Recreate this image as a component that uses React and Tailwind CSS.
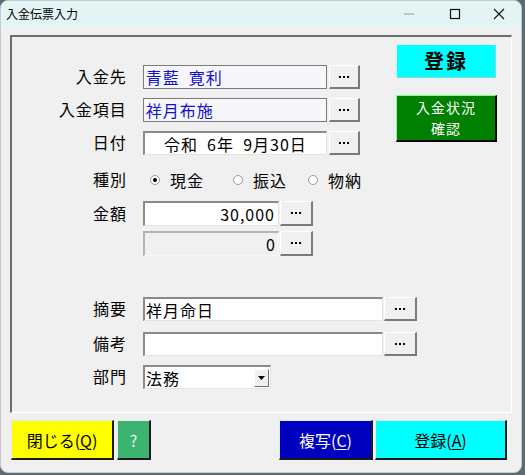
import React from "react";

const font = { fontFamily: '"Noto Sans CJK JP", "Noto Sans", sans-serif' };

// raised "..." button used beside the inputs
function DotsButton({ className }) {
  return (
    <div
      className={
        "flex items-center justify-center bg-[#f0f0f0] border-t border-l border-white border-b-2 border-r-2 border-b-[#7a7a7a] border-r-[#7a7a7a] " +
        className
      }
    >
      <span className="flex gap-[2px]">
        <span className="w-[2px] h-[2px] bg-black" />
        <span className="w-[2px] h-[2px] bg-black" />
        <span className="w-[2px] h-[2px] bg-black" />
      </span>
    </div>
  );
}

function Label({ children }) {
  return (
    <div className="w-[115px] text-right text-[16px] leading-none tracking-[1px] text-black -mt-[2px]">
      {children}
    </div>
  );
}

function Radio({ checked, label, className }) {
  return (
    <div className={"flex items-center " + className}>
      <span className="w-[10px] h-[10px] rounded-full border border-[#9a9a9a] bg-white flex items-center justify-center">
        {checked && <span className="w-[4px] h-[4px] rounded-full bg-black" />}
      </span>
      <span className="ml-[10px] text-[16px] leading-none tracking-[1px]">{label}</span>
    </div>
  );
}

function ColorButton({ className, children }) {
  return (
    <div
      className={
        "flex items-center justify-center h-[40px] text-[16px] border-t border-l border-[#e8e8e8] border-b-2 border-r-2 border-b-[#1a1a1a] border-r-[#1a1a1a] " +
        className
      }
    >
      {children}
    </div>
  );
}

export default function App() {
  return (
    <div className="w-[525px] h-[475px] bg-[#5b6c72] overflow-hidden" style={font}>
      <div className="w-[522px] h-[473px] bg-[#f0f0f0] rounded-[8px] border border-[#c4c9c9] overflow-hidden">
        {/* title bar */}
        <div className="h-[26px] bg-[#e3f4f4] flex items-center">
          <span className="ml-[5px] text-[12px] text-black">入金伝票入力</span>
          <div className="ml-auto flex items-center">
            <svg width="12" height="12" viewBox="0 0 12 12" className="mr-[34px]">
              <line x1="1" y1="6" x2="11" y2="6" stroke="#9a9a9a" strokeWidth="1" />
            </svg>
            <svg width="12" height="12" viewBox="0 0 12 12" className="mr-[32px]">
              <rect x="1.5" y="1.5" width="9" height="9" fill="none" stroke="#111" strokeWidth="1.2" />
            </svg>
            <svg width="12" height="12" viewBox="0 0 12 12" className="mr-[16px]">
              <path d="M1 1 L11 11 M11 1 L1 11" stroke="#111" strokeWidth="1.1" />
            </svg>
          </div>
        </div>

        <div className="pl-[9px]">
          {/* group frame */}
          <div className="mt-[8px] w-[502px] h-[378px] border-t-2 border-l-2 border-t-[#6e6e6e] border-l-[#6e6e6e] border-b border-r border-b-white border-r-white">
            {/* top: first three rows + side buttons */}
            <div className="flex">
              <div className="w-[348px] pt-[28px]">
                <div className="flex items-center h-[24px]">
                  <Label>入金先</Label>
                  <div className="ml-[16px] w-[185px] h-[24px] border border-[#7a7a7a] bg-[#f6f6fb] flex items-center pl-[2px] text-[16px] text-[#1010d0] tracking-[1px]">
                    青藍&nbsp;&nbsp;寛利
                  </div>
                  <DotsButton className="ml-[2px] w-[31px] h-[24px]" />
                </div>
                <div className="flex items-center h-[24px] mt-[9px]">
                  <Label>入金項目</Label>
                  <div className="ml-[16px] w-[185px] h-[24px] border border-[#7a7a7a] bg-[#f6f6fb] flex items-center pl-[2px] text-[16px] text-[#1010d0] tracking-[1px]">
                    祥月布施
                  </div>
                  <DotsButton className="ml-[2px] w-[31px] h-[24px]" />
                </div>
                <div className="flex items-center h-[24px] mt-[9px]">
                  <Label>日付</Label>
                  <div className="ml-[16px] w-[185px] h-[24px] border-t-2 border-l-2 border-t-[#8a8a8a] border-l-[#8a8a8a] border-b border-r border-b-[#e4e4e4] border-r-[#e4e4e4] bg-white flex items-center justify-center text-[16px] text-black tracking-[1px]">
                    令和&nbsp;&nbsp;6年&nbsp;&nbsp;9月30日
                  </div>
                  <DotsButton className="ml-[2px] w-[31px] h-[24px]" />
                </div>
              </div>
              <div className="ml-[36px] pt-[7px]">
                <div className="w-[100px] h-[34px] bg-[#00ffff] border-t border-l border-[#d8ffff] border-b border-r border-b-[#8ad8d8] border-r-[#8ad8d8] flex items-center justify-center text-[20px] font-bold tracking-[2px] text-black">
                  登録
                </div>
                <div className="mt-[17px] w-[101px] h-[47px] bg-[#008000] border-t border-l border-[#80ff80] border-b-2 border-r-2 border-b-black border-r-black flex flex-col items-center justify-center text-[14px] text-white tracking-[1px]">
                  <span className="leading-[21px]">入金状況</span>
                  <span className="leading-[21px]">確認</span>
                </div>
              </div>
            </div>

            {/* kind radios */}
            <div className="flex items-center h-[20px] mt-[15px]">
              <Label>種別</Label>
              <Radio checked label="現金" className="ml-[23px] w-[83px]" />
              <Radio label="振込" className="w-[75px]" />
              <Radio label="物納" className="" />
            </div>

            {/* amount */}
            <div className="flex items-center h-[25px] mt-[11px]">
              <Label>金額</Label>
              <div className="ml-[16px] w-[136px] h-[25px] border-t-2 border-l-2 border-t-[#8a8a8a] border-l-[#8a8a8a] border-b border-r border-b-[#e4e4e4] border-r-[#e4e4e4] bg-white flex items-center justify-end pr-[3px] text-[16px] tracking-[1px]">
                30,000
              </div>
              <DotsButton className="ml-[1px] w-[33px] h-[25px]" />
            </div>
            <div className="flex items-center h-[25px] mt-[5px]">
              <div className="w-[115px]" />
              <div className="ml-[16px] w-[136px] h-[25px] border-t-2 border-l-2 border-t-[#b4b4b4] border-l-[#b4b4b4] border-b border-r border-b-[#f8f8f8] border-r-[#f8f8f8] bg-[#f0f0f0] flex items-center justify-end pr-[3px] text-[16px]">
                0
              </div>
              <DotsButton className="ml-[1px] w-[33px] h-[25px]" />
            </div>

            {/* summary / notes */}
            <div className="flex items-center h-[24px] mt-[41px]">
              <Label>摘要</Label>
              <div className="ml-[16px] w-[240px] h-[24px] border-t-2 border-l-2 border-t-[#8a8a8a] border-l-[#8a8a8a] border-b border-r border-b-[#e4e4e4] border-r-[#e4e4e4] bg-white flex items-center pl-[1px] text-[16px] tracking-[1px]">
                祥月命日
              </div>
              <DotsButton className="ml-[1px] w-[33px] h-[24px]" />
            </div>
            <div className="flex items-center h-[24px] mt-[11px]">
              <Label>備考</Label>
              <div className="ml-[16px] w-[240px] h-[24px] border-t-2 border-l-2 border-t-[#8a8a8a] border-l-[#8a8a8a] border-b border-r border-b-[#e4e4e4] border-r-[#e4e4e4] bg-white" />
              <DotsButton className="ml-[1px] w-[33px] h-[24px]" />
            </div>
            <div className="flex items-center h-[24px] mt-[9px]">
              <Label>部門</Label>
              <div className="ml-[16px] w-[128px] h-[24px] border-t-2 border-l-2 border-t-[#8a8a8a] border-l-[#8a8a8a] border-b border-r border-b-[#e4e4e4] border-r-[#e4e4e4] bg-white flex items-center">
                <span className="pl-[1px] text-[16px] tracking-[1px]">法務</span>
                <div className="ml-auto mr-[1px] w-[15px] h-[18px] bg-[#f0f0f0] border-t border-l border-white border-b border-r border-b-[#707070] border-r-[#707070] flex items-center justify-center">
                  <svg width="7" height="4" viewBox="0 0 7 4">
                    <path d="M0 0 L7 0 L3.5 4 Z" fill="#000" />
                  </svg>
                </div>
              </div>
            </div>
          </div>

          {/* bottom buttons */}
          <div className="flex mt-[7px] ml-[1px]">
            <ColorButton className="w-[103px] bg-[#ffff00] text-black">
              閉じる(<span className="underline underline-offset-2">Q</span>)
            </ColorButton>
            <ColorButton className="ml-[3px] w-[34px] bg-[#3cb371] text-[#e8f4ee] text-[14px]">?</ColorButton>
            <ColorButton className="ml-[128px] w-[94px] bg-[#0000c0] text-white">
              複写(<span className="underline underline-offset-2">C</span>)
            </ColorButton>
            <ColorButton className="ml-[2px] w-[132px] bg-[#00ffff] text-black">
              登録(<span className="underline underline-offset-2">A</span>)
            </ColorButton>
          </div>
        </div>
      </div>
    </div>
  );
}
